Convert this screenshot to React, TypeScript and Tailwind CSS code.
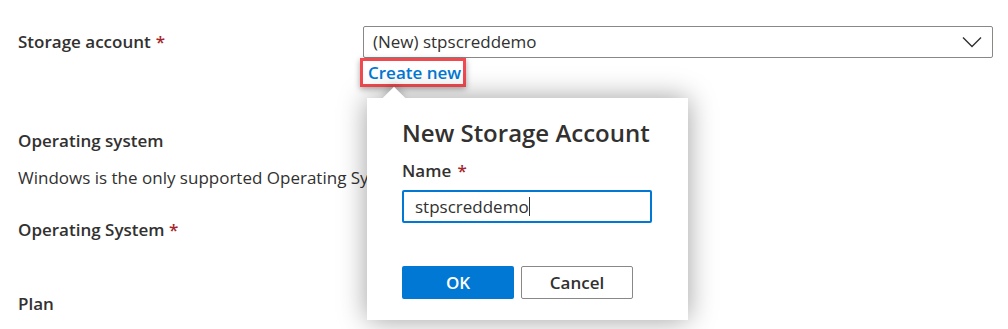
import React from "react";

function Chevron() {
  return (
    <svg width="20" height="12" viewBox="0 0 20 12" fill="none">
      <path d="M1 1.5 L10 10.5 L19 1.5" stroke="#323130" strokeWidth="1.4" />
    </svg>
  );
}

export default function App() {
  return (
    <div className="relative flex flex-col w-[1008px] h-[329px] overflow-hidden bg-white text-[#323130] font-['Open_Sans',sans-serif] text-[17px]">
      <p className="ml-[18px] -mt-[22px] h-[23px] leading-[23px] whitespace-nowrap">
        Specify a storage account to use for logging
      </p>

      <div className="mt-[25px] flex">
        <div className="w-[363px] pl-[18px] h-[32px] flex items-center font-semibold">
          Storage account <span className="ml-[5px] text-[#a4262c]">*</span>
        </div>
        <div className="w-[630px] flex flex-col">
          <div className="h-[32px] border border-[#8a8886] rounded-[2px] flex items-center justify-between pl-[9px] pr-[10px]">
            <span>(New) stpscreddemo</span>
            <Chevron />
          </div>
          <div className="relative mt-[2px] h-[22px] pl-[4px]">
            <span className="relative z-10 font-semibold text-[#0078d4] leading-[22px] px-[1px] bg-white">Create new</span>
            <div className="absolute left-[-3px] top-[-2px] w-[106px] h-[29px] border-[3px] border-[#ef4a4f] shadow-[0_2px_6px_rgba(0,0,0,0.35)] z-20" />
          </div>
        </div>
      </div>

      <div className="ml-[18px] mt-[47px] font-semibold leading-[23px]">Operating system</div>
      <div className="ml-[18px] mt-[14px] leading-[23px] whitespace-nowrap">
        Windows is the only supported Operating System for this stack.
      </div>
      <div className="ml-[18px] mt-[29px] font-semibold leading-[23px]">
        Operating System <span className="text-[#a4262c]">*</span>
      </div>
      <div className="ml-[18px] mt-[51px] font-semibold leading-[23px]">Plan</div>

      {/* Callout */}
      <div className="absolute left-[367px] top-[98px] w-[321px] h-[222px] bg-white shadow-[0_0_26px_rgba(0,0,0,0.38)] z-30">
        <div className="absolute left-[19px] -top-[8px] w-[16px] h-[16px] bg-white rotate-45 shadow-[-3px_-3px_6px_rgba(0,0,0,0.15)]" />
        <div className="relative bg-white h-full pl-[35px] pt-[19px]">
          <div className="text-[24px] font-semibold leading-[32px]">New Storage Account</div>
          <div className="mt-[10px] font-semibold leading-[23px]">
            Name <span className="ml-[2px] text-[#a4262c]">*</span>
          </div>
          <div className="mt-[8px] w-[250px] h-[33px] border-2 border-[#0078d4] rounded-[2px] flex items-center pl-[11px]">
            <span>stpscreddemo</span>
            <span className="w-px h-[19px] bg-[#323130]" />
          </div>
          <div className="mt-[43px] flex gap-[7px]">
            <button className="w-[112px] h-[33px] bg-[#0078d4] text-white font-semibold rounded-[2px]">OK</button>
            <button className="w-[112px] h-[33px] bg-white border border-[#8a8886] text-[#323130] font-semibold rounded-[2px]">Cancel</button>
          </div>
        </div>
      </div>
    </div>
  );
}
